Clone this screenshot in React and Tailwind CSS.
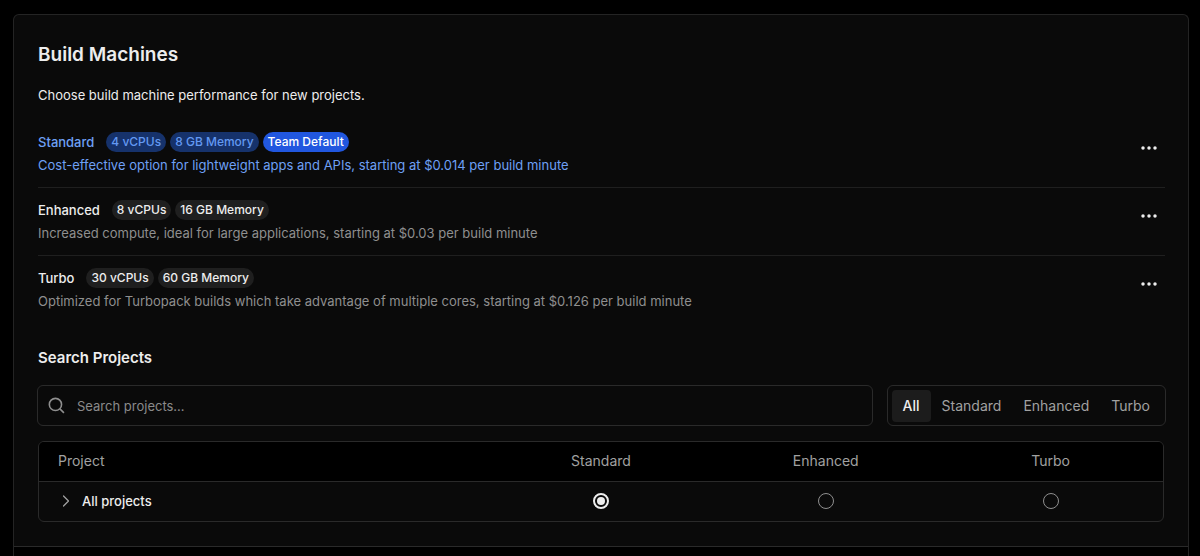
import { useState } from "react";
import { ChevronRight } from "lucide-react";

const MACHINES = [
  {
    name: "Standard",
    specs: ["4 vCPUs", "8 GB Memory"],
    isDefault: true,
    description:
      "Cost-effective option for lightweight apps and APIs, starting at $0.014 per build minute",
  },
  {
    name: "Enhanced",
    specs: ["8 vCPUs", "16 GB Memory"],
    description:
      "Increased compute, ideal for large applications, starting at $0.03 per build minute",
  },
  {
    name: "Turbo",
    specs: ["30 vCPUs", "60 GB Memory"],
    description:
      "Optimized for Turbopack builds which take advantage of multiple cores, starting at $0.126 per build minute",
  },
];

const FILTERS = ["All", "Standard", "Enhanced", "Turbo"];

function Badge({ className, children }) {
  return (
    <span
      className={`inline-flex h-5 items-center rounded-full px-[5px] text-[12px] leading-5 font-medium whitespace-nowrap ${className}`}
    >
      {children}
    </span>
  );
}

function MachineRow({ machine }) {
  const active = machine.isDefault;
  return (
    <li className="flex items-start justify-between border-b border-[#1f1f1f] pt-3 pb-3 last:border-transparent">
      <div className="flex min-w-0 flex-col gap-[3px]">
        <div className="flex items-center gap-3">
          <span
            className={`text-[13px] leading-5 font-medium ${active ? "text-[#6ea0f5]" : "text-[#ededed]"}`}
          >
            {machine.name}
          </span>
          <div className="flex items-center gap-1">
            {machine.specs.map((spec) => (
              <Badge
                key={spec}
                className={active ? "bg-[#16326b] text-[#6399f2]" : "bg-[#1f1f1f] text-[#ededed]"}
              >
                {spec}
              </Badge>
            ))}
            {active && <Badge className="bg-[#2157df] text-white">Team Default</Badge>}
          </div>
        </div>
        <p className={`text-[13px] leading-5 ${active ? "text-[#6ea0f5]" : "text-[#8f8f8f]"}`}>
          {machine.description}
        </p>
      </div>
      <button
        type="button"
        aria-label={`${machine.name} options`}
        className="flex size-8 shrink-0 items-center justify-center rounded-md text-[#ededed]"
      >
        <svg width="18" height="18" viewBox="0 0 18 18" fill="currentColor" aria-hidden="true">
          <circle cx="3" cy="9" r="1.75" />
          <circle cx="9" cy="9" r="1.75" />
          <circle cx="15" cy="9" r="1.75" />
        </svg>
      </button>
    </li>
  );
}

export default function App() {
  const [filter, setFilter] = useState("All");
  const [selected, setSelected] = useState("Standard");

  return (
    <main className="min-h-screen bg-black pt-[14px] pr-[11px] pl-[13px] font-['Inter',sans-serif] text-[#ededed]">
      <section className="rounded-t-md border-x border-t border-[#242424] bg-[#0a0a0a]">
        <div className="pt-6 pr-[23px] pb-6 pl-6">
          <h2 className="text-[19px] leading-8 font-semibold">Build Machines</h2>
          <p className="mt-3 text-[13px] leading-6">
            Choose build machine performance for new projects.
          </p>

          <ul className="mt-[13px]">
            {MACHINES.map((machine) => (
              <MachineRow key={machine.name} machine={machine} />
            ))}
          </ul>

          <h3 className="mt-[22px] text-[15px] leading-6 font-semibold">Search Projects</h3>

          <div className="-mx-px mt-[15px] flex items-center gap-[14px]">
            <label className="flex h-[41px] min-w-0 grow items-center gap-3 rounded-md border border-[#2a2a2a] px-[10px]">
              <svg
                width="17"
                height="17"
                viewBox="0 0 16 16"
                fill="none"
                stroke="#8f8f8f"
                strokeWidth="1.5"
                className="shrink-0"
                aria-hidden="true"
              >
                <circle cx="7" cy="7" r="5.75" />
                <path d="M11.2 11.2 15 15" />
              </svg>
              <input
                type="search"
                aria-label="Search projects"
                placeholder="Search projects…"
                className="w-full bg-transparent text-[13px] leading-5 outline-none placeholder:text-[#8a8a8a]"
              />
            </label>
            <div className="flex h-[41px] shrink-0 items-center rounded-md border border-[#2a2a2a] px-1">
              {FILTERS.map((name) => (
                <button
                  key={name}
                  type="button"
                  aria-pressed={filter === name}
                  onClick={() => setFilter(name)}
                  className={`h-8 rounded-sm px-[11px] text-[14px] leading-5 ${
                    filter === name ? "bg-[#1c1c1c] font-medium text-[#ededed]" : "text-[#a1a1a1]"
                  }`}
                >
                  {name}
                </button>
              ))}
            </div>
          </div>

          <div className="mt-[15px] mr-px overflow-hidden rounded-md border border-[#2a2a2a]">
            <table className="w-full table-fixed border-collapse text-[14px] leading-5">
              <thead className="bg-black text-[#a1a1a1]">
                <tr className="h-[39px] border-b border-[#2a2a2a]">
                  <th scope="col" className="w-2/5 pl-[19px] text-left font-normal">
                    Project
                  </th>
                  {MACHINES.map(({ name }) => (
                    <th key={name} scope="col" className="w-1/5 text-center font-normal">
                      {name}
                    </th>
                  ))}
                </tr>
              </thead>
              <tbody>
                <tr className="h-10">
                  <td className="pl-[17px]">
                    <button type="button" className="flex items-center gap-[6px] text-[13px] font-medium">
                      <ChevronRight size={20} strokeWidth={1.5} color="#a1a1a1" />
                      All projects
                    </button>
                  </td>
                  {MACHINES.map(({ name }) => (
                    <td key={name}>
                      <input
                        type="radio"
                        name="all-projects"
                        aria-label={`All projects: ${name}`}
                        checked={selected === name}
                        onChange={() => setSelected(name)}
                        className="mx-auto block size-4 appearance-none rounded-full border border-[#8f8f8f] checked:border-2 checked:border-[#ededed] checked:bg-[#ededed] checked:bg-clip-content checked:p-[2px]"
                      />
                    </td>
                  ))}
                </tr>
              </tbody>
            </table>
          </div>
        </div>
        <div className="h-3 border-t border-[#2a2a2a] bg-black" />
      </section>
    </main>
  );
}
